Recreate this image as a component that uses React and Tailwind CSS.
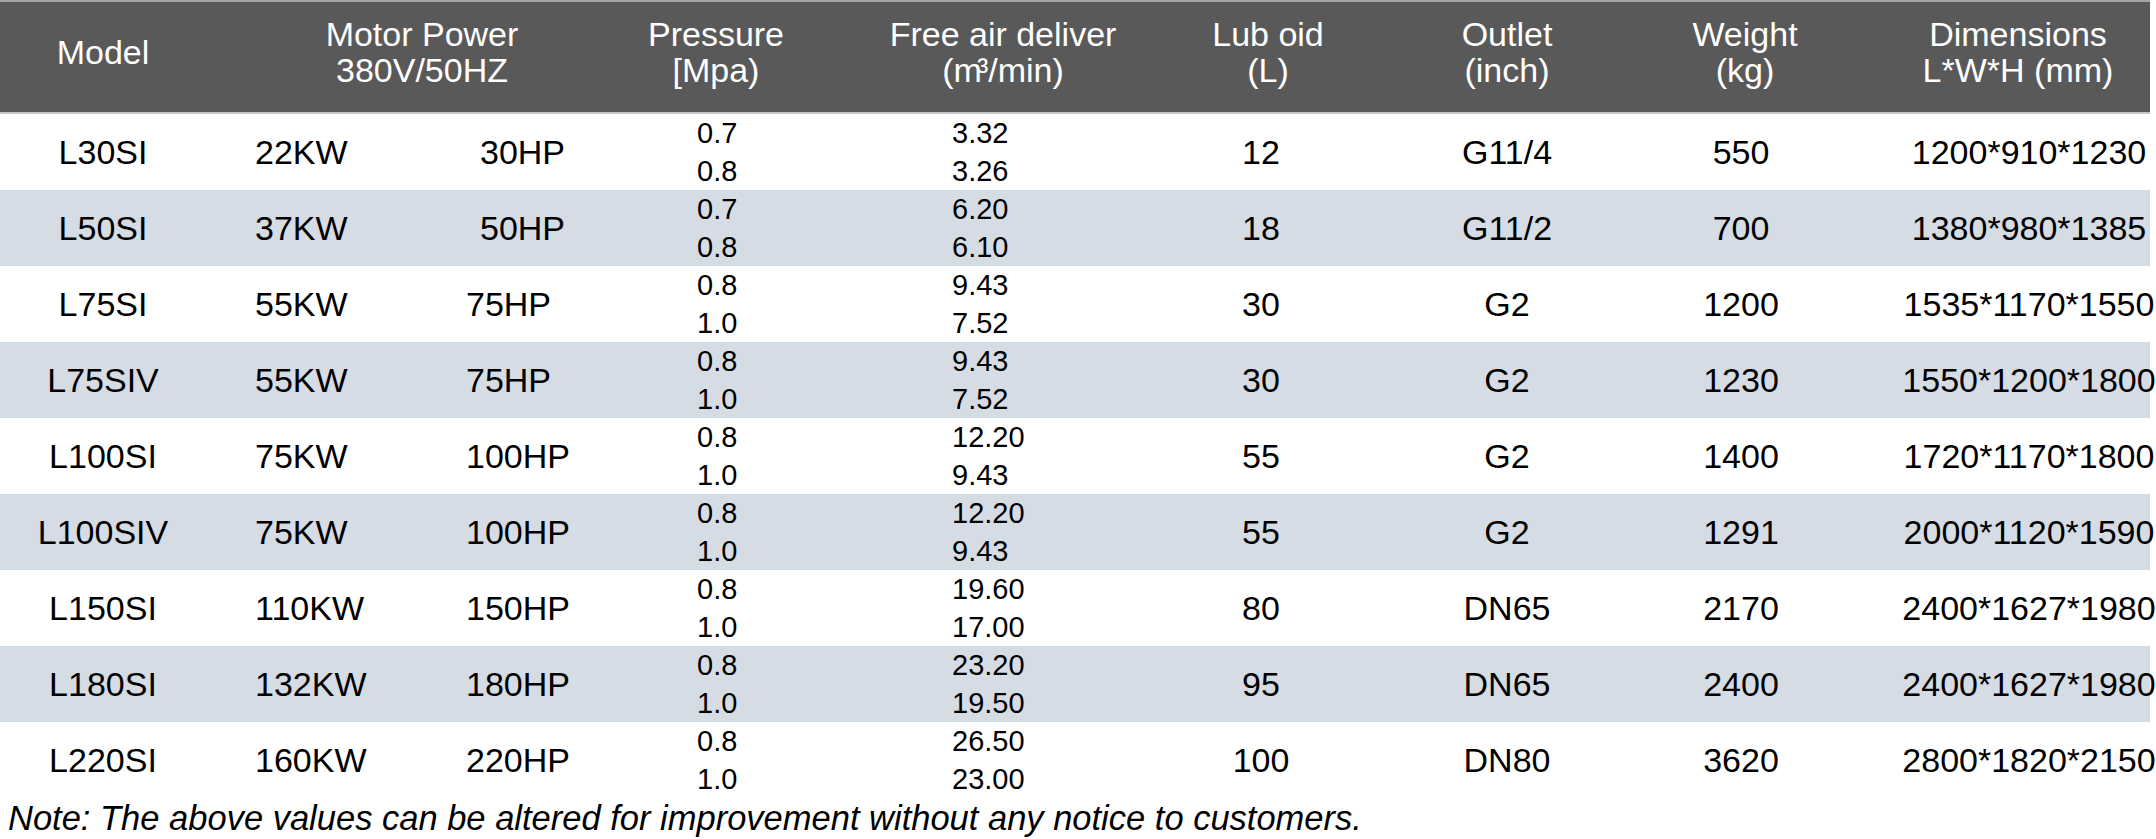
import React from 'react';

const rows = [
  { model: 'L30SI', kw: '22KW', hp: '30HP', hpPad: 'pl-[14px]', p: ['0.7', '0.8'], air: ['3.32', '3.26'], lub: '12', outlet: 'G11/4', weight: '550', dim: '1200*910*1230' },
  { model: 'L50SI', kw: '37KW', hp: '50HP', hpPad: 'pl-[14px]', p: ['0.7', '0.8'], air: ['6.20', '6.10'], lub: '18', outlet: 'G11/2', weight: '700', dim: '1380*980*1385' },
  { model: 'L75SI', kw: '55KW', hp: '75HP', hpPad: 'pl-0', p: ['0.8', '1.0'], air: ['9.43', '7.52'], lub: '30', outlet: 'G2', weight: '1200', dim: '1535*1170*1550' },
  { model: 'L75SIV', kw: '55KW', hp: '75HP', hpPad: 'pl-0', p: ['0.8', '1.0'], air: ['9.43', '7.52'], lub: '30', outlet: 'G2', weight: '1230', dim: '1550*1200*1800' },
  { model: 'L100SI', kw: '75KW', hp: '100HP', hpPad: 'pl-0', p: ['0.8', '1.0'], air: ['12.20', '9.43'], lub: '55', outlet: 'G2', weight: '1400', dim: '1720*1170*1800' },
  { model: 'L100SIV', kw: '75KW', hp: '100HP', hpPad: 'pl-0', p: ['0.8', '1.0'], air: ['12.20', '9.43'], lub: '55', outlet: 'G2', weight: '1291', dim: '2000*1120*1590' },
  { model: 'L150SI', kw: '110KW', hp: '150HP', hpPad: 'pl-0', p: ['0.8', '1.0'], air: ['19.60', '17.00'], lub: '80', outlet: 'DN65', weight: '2170', dim: '2400*1627*1980' },
  { model: 'L180SI', kw: '132KW', hp: '180HP', hpPad: 'pl-0', p: ['0.8', '1.0'], air: ['23.20', '19.50'], lub: '95', outlet: 'DN65', weight: '2400', dim: '2400*1627*1980' },
  { model: 'L220SI', kw: '160KW', hp: '220HP', hpPad: 'pl-0', p: ['0.8', '1.0'], air: ['26.50', '23.00'], lub: '100', outlet: 'DN80', weight: '3620', dim: '2800*1820*2150' },
];

const cell = 'flex items-center whitespace-nowrap shrink-0';

export default function App() {
  return (
    <div className="w-[2156px] h-[839px] bg-white text-black overflow-hidden" style={{ fontFamily: '"Liberation Sans", Arial, sans-serif' }}>
      <div className="w-[2150px]">
        {/* header */}
        <div className="flex h-[114px] bg-[#595959] text-white text-[34px] leading-[36px] border-t-2 border-t-[#a6a6a6] border-b-2 border-b-[#c8c8c8] pb-[10px]">
          <div className={`${cell} w-[206px] justify-center`}>Model</div>
          <div className={`${cell} w-[432px] justify-center flex-col`}>
            <span>Motor Power</span>
            <span>380V/50HZ</span>
          </div>
          <div className={`${cell} w-[156px] justify-center flex-col`}>
            <span>Pressure</span>
            <span>[Mpa)</span>
          </div>
          <div className={`${cell} w-[418px] justify-center flex-col`}>
            <span>Free air deliver</span>
            <span>(m<span className="-ml-[5px]">³</span>/min)</span>
          </div>
          <div className={`${cell} w-[112px] justify-center flex-col`}>
            <span>Lub oid</span>
            <span>(L)</span>
          </div>
          <div className={`${cell} w-[366px] justify-center flex-col`}>
            <span>Outlet</span>
            <span>(inch)</span>
          </div>
          <div className={`${cell} w-[110px] justify-center flex-col`}>
            <span>Weight</span>
            <span>(kg)</span>
          </div>
          <div className={`${cell} w-[350px] pl-[86px] justify-center flex-col`}>
            <span>Dimensions</span>
            <span>L*W*H (mm)</span>
          </div>
        </div>

        {/* body */}
        {rows.map((r, i) => (
          <div key={r.model} className={`flex h-[76px] text-[34px] ${i % 2 === 1 ? 'bg-[#d6dce4]' : 'bg-white'}`}>
            <div className={`${cell} w-[206px] justify-center`}>{r.model}</div>
            <div className={`${cell} w-[260px] pl-[49px]`}>{r.kw}</div>
            <div className={`${cell} w-[172px] ${r.hpPad}`}>{r.hp}</div>
            <div className="w-[156px] shrink-0 pl-[59px] text-[29px] leading-[38px]">
              <div>{r.p[0]}</div>
              <div>{r.p[1]}</div>
            </div>
            <div className="w-[418px] shrink-0 pl-[158px] text-[29px] leading-[38px]">
              <div>{r.air[0]}</div>
              <div>{r.air[1]}</div>
            </div>
            <div className={`${cell} w-[112px] pr-[14px] justify-center`}>{r.lub}</div>
            <div className={`${cell} w-[366px] justify-center`}>{r.outlet}</div>
            <div className={`${cell} w-[110px] pr-[8px] justify-center`}>{r.weight}</div>
            <div className={`${cell} w-[350px] pl-[108px] justify-center`}>{r.dim}</div>
          </div>
        ))}
      </div>

      <p className="pl-[8px] text-[34.5px] leading-[41px] italic whitespace-nowrap">
        Note: The above values can be altered for improvement without any notice to customers.
      </p>
    </div>
  );
}
